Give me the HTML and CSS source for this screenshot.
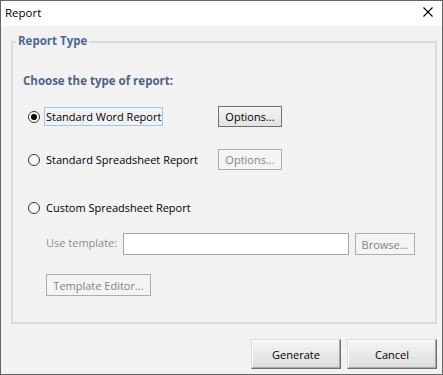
FILE: index.html
```html
<!DOCTYPE html>
<html lang="en">
  <head>
    <meta charset="UTF-8" />
    <title>Report</title>
    <link rel="stylesheet" href="styles.css">
  </head>
  <body>
    <div class="window">
      <div class="titlebar">
        <span class="title">Report</span>
        <svg class="close" width="10" height="10" viewBox="0 0 10 10">
          <path d="M0.5 0.5 L9.5 9.5 M9.5 0.5 L0.5 9.5" stroke="#000" stroke-width="1.1" fill="none" />
        </svg>
      </div>

      <div class="content">
        <div class="group">
          <span class="legend">Report Type</span>
          <div class="heading">Choose the type of report:</div>

          <div class="row row-word">
            <div class="choice">
              <span class="radio checked"></span>
              <span class="label focused">Standard Word Report</span>
            </div>
            <button class="btn">Options...</button>
          </div>

          <div class="row row-sheet">
            <div class="choice">
              <span class="radio"></span>
              <span class="label">Standard Spreadsheet Report</span>
            </div>
            <button class="btn" disabled>Options...</button>
          </div>

          <div class="row row-custom">
            <div class="choice">
              <span class="radio"></span>
              <span class="label">Custom Spreadsheet Report</span>
            </div>
          </div>

          <div class="template-row">
            <span class="template-label">Use template:</span>
            <input type="text" class="template-input" />
            <button class="btn browse" disabled>Browse...</button>
          </div>

          <button class="btn editor" disabled>Template Editor...</button>
        </div>

        <div class="actions">
          <button class="big-btn">Generate</button>
          <button class="big-btn">Cancel</button>
        </div>
      </div>
    </div>
  </body>
</html>
```

FILE: styles.css
```css
html,
body {
  margin: 0;
  padding: 0;
}
body {
  font-family: "Open Sans", "Noto Sans", sans-serif;
  font-size: 11px;
  color: #000;
  background: #f2f2f2;
}
.window {
  width: 443px;
  height: 375px;
  box-sizing: border-box;
  border: 1px solid #646464;
  background: #f2f2f2;
  display: flex;
  flex-direction: column;
}
.titlebar {
  height: 25px;
  background: #fff;
  display: flex;
  align-items: center;
  justify-content: space-between;
  padding: 0 9px 0 4px;
  flex-shrink: 0;
}
.title {
  font-size: 11.5px;
  line-height: 16px;
  margin-top: -1px;
}
.close {
  display: block;
  margin-top: -3px;
}
.content {
  display: flex;
  flex-direction: column;
  padding: 15px 5px 0 10px;
}
.group {
  height: 283px;
  box-sizing: border-box;
  border: 2px solid #dadada;
  display: flex;
  flex-direction: column;
  align-items: flex-start;
  padding: 0 0 0 10px;
}
.legend {
  margin: -10px 0 0 -7px;
  padding: 0 2px 0 2px;
  background: #f2f2f2;
  font-size: 11.5px;
  font-weight: bold;
  color: #4f6699;
  line-height: 16px;
}
.heading {
  margin-top: 24px;
  font-size: 11.5px;
  font-weight: bold;
  color: #4f6285;
  line-height: 16px;
}
.row {
  display: flex;
  align-items: center;
  height: 21px;
}
.row-word {
  margin-top: 17px;
}
.row-sheet {
  margin-top: 22px;
}
.row-custom {
  margin-top: 27px;
}
.choice {
  width: 195px;
  display: flex;
  align-items: center;
}
.radio {
  width: 12px;
  height: 12px;
  margin-left: 5px;
  box-sizing: border-box;
  border: 1px solid #333;
  border-radius: 50%;
  background: #fff;
  position: relative;
  flex-shrink: 0;
}
.radio.checked::after {
  content: "";
  position: absolute;
  left: 2px;
  top: 2px;
  width: 6px;
  height: 6px;
  border-radius: 50%;
  background: #000;
}
.label {
  margin-left: 4px;
  padding: 0 1px;
  border: 1px solid transparent;
  line-height: 17px;
  white-space: nowrap;
}
.label.focused {
  border-color: #99c9ef;
}
.btn {
  font-family: inherit;
  font-size: 11px;
  width: 64px;
  height: 21px;
  padding: 0;
  box-sizing: border-box;
  border: 1px solid #707070;
  background: linear-gradient(#f4f4f4, #e2e2e2);
  color: #000;
}
.btn:disabled {
  border-color: #adadad;
  background: #f4f4f4;
  color: #838383;
}
.template-row {
  display: flex;
  align-items: center;
  margin-top: 15px;
  padding-left: 23px;
  height: 22px;
}
.template-label {
  width: 77px;
  color: #8d8d8d;
  margin-top: -4px;
  white-space: nowrap;
}
.template-input {
  width: 226px;
  height: 22px;
  box-sizing: border-box;
  border: 1px solid #a5a5a5;
  background: #fff;
  margin: 0;
}
.btn.browse {
  width: 60px;
  height: 22px;
  margin-left: 6px;
}
.btn.editor {
  width: 105px;
  height: 22px;
  margin: 19px 0 0 23px;
}
.actions {
  display: flex;
  justify-content: flex-end;
  gap: 6px;
  margin-top: 15px;
}
.big-btn {
  font-family: inherit;
  font-size: 11px;
  width: 90px;
  height: 30px;
  padding: 0;
  box-sizing: border-box;
  border: 1px solid;
  border-color: #dcdcdc #6f6f6f #6f6f6f #dcdcdc;
  box-shadow: inset -1px -1px #a8a8a8, inset 1px 1px #fff;
  background: linear-gradient(#f5f5f5, #dcdcdc);
  color: #000;
}
```
